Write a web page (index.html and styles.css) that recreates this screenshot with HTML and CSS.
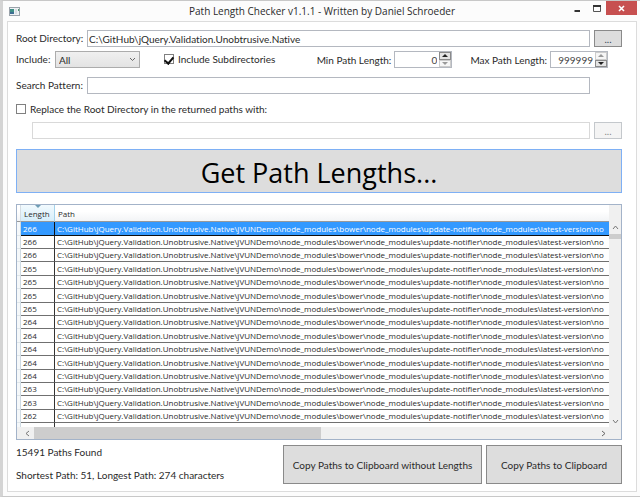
FILE: index.html
```html
<!DOCTYPE html>
<html lang="en">
<head>
<meta charset="utf-8">
<title>Path Length Checker v1.1.1 - Written by Daniel Schroeder</title>
<link rel="stylesheet" href="styles.css">
</head>
<body>
<div class="window">
  <header class="titlebar">
    <svg class="app-icon" width="11" height="9" viewBox="0 0 11 9" aria-hidden="true">
      <rect x=".5" y=".5" width="10" height="8" fill="#eef1f4" stroke="#9aa2aa"/>
      <rect x="1" y="2" width="4" height="5" fill="#3f8f86"/>
      <rect x="1" y="5" width="4" height="2" fill="#3d6d92"/>
      <rect x="6" y="2" width="2" height="5" fill="#d9dee3"/>
      <rect x="9" y="2" width="1" height="2" fill="#4a9a70"/>
    </svg>
    <h1 class="title">Path Length Checker v1.1.1 - Written by Daniel Schroeder</h1>
    <div class="window-buttons">
      <button class="win-btn" aria-label="Minimize"><svg width="7" height="9" viewBox="0 0 7 9"><path d="M.5 7H6" stroke="#333" stroke-width="2"/></svg></button>
      <button class="win-btn win-max" aria-label="Maximize"><svg width="8" height="7" viewBox="0 0 8 7"><path d="M.5 1v5.500h7V1" fill="none" stroke="#555"/><path d="M0 1h8" stroke="#333" stroke-width="2"/></svg></button>
      <button class="win-btn win-close" aria-label="Close"><svg width="7" height="7" viewBox="0 0 7 7"><path d="M1 1l5 5M6 1L1 6" stroke="#fff" stroke-width="1.600"/></svg></button>
    </div>
  </header>

  <main class="client">
    <div class="field-row">
      <label class="field-label" for="root">Root Directory:</label>
      <input class="text-box" id="root" type="text" value="C:\GitHub\jQuery.Validation.Unobtrusive.Native">
      <button class="browse" aria-label="Browse for root directory">...</button>
    </div>

    <div class="options">
      <label class="include-label" for="include">Include:</label>
      <span class="select-wrap">
        <select class="select" id="include"><option>All</option><option>Files</option><option>Directories</option></select>
        <svg class="chevron" width="7" height="5" viewBox="0 0 7 5"><path d="M1 1l2.500 2.500L6 1" fill="none" stroke="#666"/></svg>
      </span>
      <label class="check sub-check"><input type="checkbox" checked>Include Subdirectories</label>
      <div class="number">
        <label for="min">Min Path Length:</label>
        <span class="spinner">
          <input id="min" type="text" value="0">
          <span class="steps">
            <button class="step" aria-label="Increase minimum"><svg width="6" height="3" viewBox="0 0 6 3"><path d="M0 3l3-3 3 3z"/></svg></button>
            <button class="step" aria-label="Decrease minimum" disabled><svg width="6" height="3" viewBox="0 0 6 3"><path d="M0 0l3 3 3-3z"/></svg></button>
          </span>
        </span>
      </div>
      <div class="number">
        <label for="max">Max Path Length:</label>
        <span class="spinner">
          <input id="max" type="text" value="999999">
          <span class="steps">
            <button class="step" aria-label="Increase maximum" disabled><svg width="6" height="3" viewBox="0 0 6 3"><path d="M0 3l3-3 3 3z"/></svg></button>
            <button class="step" aria-label="Decrease maximum"><svg width="6" height="3" viewBox="0 0 6 3"><path d="M0 0l3 3 3-3z"/></svg></button>
          </span>
        </span>
      </div>
    </div>

    <div class="field-row search-row">
      <label class="field-label" for="pattern">Search Pattern:</label>
      <input class="text-box" id="pattern" type="text">
    </div>

    <label class="check replace-check"><input type="checkbox">Replace the Root Directory in the returned paths with:</label>
    <div class="field-row replace-row">
      <input class="text-box" type="text" aria-label="Replacement root directory" disabled>
      <button class="browse" aria-label="Browse for replacement directory" disabled>...</button>
    </div>

    <button class="run">Get Path Lengths...</button>

    <section class="grid">
      <div class="table-area">
        <table class="paths">
          <thead><tr><th class="rowhead"></th><th class="length sorted">Length<svg class="sort" width="6" height="3" viewBox="0 0 6 3"><path d="M0 0h6L3 3z" fill="#6f9db5"/></svg></th><th class="path">Path</th></tr></thead>
          <tbody id="rows"></tbody>
        </table>
      </div>
      <div class="vscroll">
        <svg width="7" height="5" viewBox="0 0 7 5"><path d="M1 4l2.500-3L6 4" fill="none" stroke="#777"/></svg>
        <span class="vthumb"></span>
        <svg class="down" width="7" height="5" viewBox="0 0 7 5"><path d="M1 1l2.500 3L6 1" fill="none" stroke="#777"/></svg>
      </div>
      <div class="hscroll">
        <svg width="5" height="7" viewBox="0 0 5 7"><path d="M4 1L1 3.500 4 6" fill="none" stroke="#777"/></svg>
        <span class="track"><span class="hthumb"></span></span>
        <svg width="5" height="7" viewBox="0 0 5 7"><path d="M1 1l3 2.500L1 6" fill="none" stroke="#666"/></svg>
      </div>
    </section>

    <footer class="footer">
      <div class="status">
        <p>15491 Paths Found</p>
        <p>Shortest Path: 51, Longest Path: 274 characters</p>
      </div>
      <button class="copy copy-wide">Copy Paths to Clipboard without Lengths</button>
      <button class="copy">Copy Paths to Clipboard</button>
    </footer>
  </main>
</div>
<script src="script.js"></script>
</body>
</html>
```
FILE: script.js
```js
const lengths = [266, 266, 266, 265, 265, 265, 265, 264, 264, 264, 264, 264, 263, 263, 262];
const path = "C:\\GitHub\\jQuery.Validation.Unobtrusive.Native\\jVUNDemo\\node_modules\\bower\\node_modules\\update-notifier\\node_modules\\latest-version\\no";
const body = document.getElementById("rows");

function addRow(cells, className) {
  const row = body.insertRow();
  if (className) row.className = className;
  row.insertCell().className = "rowhead";
  cells.forEach((text) => { row.insertCell().textContent = text; });
}

lengths.forEach((length, i) => addRow([length, path], i === 0 ? "selected" : ""));
addRow(["", ""], "partial");
```
FILE: styles.css
```css
* { box-sizing: border-box; }

body {
  margin: 0;
  background: #fcfcfc;
  color: #2a2a2a;
  font: 10px/14px Lato, "Open Sans", sans-serif;
  font-variant-ligatures: none;
}

button, input, select { margin: 0; font: inherit; font-variant-ligatures: none; color: inherit; border-radius: 0; }
button { display: flex; align-items: center; justify-content: center; padding: 0; }
svg { display: block; flex: none; }

.window {
  display: flex;
  flex-direction: column;
  min-height: 100vh;
  padding: 0 3px 4px 4px;
  border: solid #c8c8c8;
  border-width: 1px 0 1px 3px;
  border-left-color: #d4d4d4;
}

.titlebar { display: flex; height: 20px; padding-left: 2px; align-items: center; position: relative; }
.title { flex: 1; margin: 0; font: 400 10px/14px "Open Sans", sans-serif; text-align: center; padding-left: 56px; }
.window-buttons { display: flex; align-self: flex-start; height: 14px; }
.win-btn { width: 19px; border: 0; background: none; }
.win-close { width: 31px; background: #c75050; }

.client {
  flex: 1;
  display: flex;
  flex-direction: column;
  padding: 8px 14px 7px 8px;
  border: 1px solid #dcdcdc;
  background: #fff;
}

.field-row { display: grid; grid-template-columns: 67px 1fr 28px; gap: 4px; align-items: center; }
.field-label { white-space: nowrap; padding-bottom: 2px; }
.text-box { width: 100%; height: 17px; padding: 0 1px; border: 1px solid #b4b8c0; background: #fff; }
.text-box:disabled { border-color: #d9d9d9; }
.browse { height: 17px; border: 1px solid #8a8a8a; background: #ddd; color: #345; }
.browse:disabled { border-color: #c4c8cc; background: #f4f4f4; color: #888; }

.options { display: flex; align-items: center; height: 17px; margin-top: 4px; }
.include-label { width: 39px; padding-bottom: 2px; }
.select-wrap { position: relative; display: flex; }
.select {
  appearance: none;
  width: 85px;
  height: 17px;
  padding: 0 3px;
  border: 1px solid #acacac;
  background: linear-gradient(#f0f0f0, #e3e3e3);
}
.chevron { position: absolute; right: 4px; top: 6px; pointer-events: none; }

.check { display: flex; align-items: center; gap: 4px; }
.check input {
  appearance: none;
  display: grid;
  justify-content: center;
  width: 10px;
  height: 10px;
  border: 1px solid #808080;
  background: #fff;
}
.check input:checked::before {
  content: "";
  width: 4px;
  height: 7px;
  border: solid #111;
  border-width: 0 2px 2px 0;
  rotate: 40deg;
}
.sub-check { margin: 0 auto 0 24px; padding-bottom: 2px; }

.number { display: flex; align-items: center; gap: 3px; margin-right: 14px; }
.number + .number { margin-left: 4px; }
.spinner { display: flex; width: 58px; height: 17px; border: 1px solid #b4b8c0; }
.spinner input { flex: 1; width: 0; min-width: 0; padding: 0 2px; border: 0; background: none; color: #444; text-align: right; }
.steps { display: flex; flex-direction: column; width: 12px; }
.step { flex: 1; border: 1px solid #8a8a8a; background: #e4e4e4; fill: #222; }
.step:disabled { border-color: #ccc; background: #f6f6f6; fill: #999; }

.search-row { margin-top: 9px; }
.replace-check { margin-top: 8px; }
.replace-row { grid-template-columns: 1fr 28px; margin: 6px 0 0 16px; }

.run {
  height: 44px;
  margin-top: 10px;
  padding-top: 4px;
  border: 1px solid #7eb0f5;
  background: #ddd;
  color: #000;
  font: 27px/32px "Open Sans", sans-serif;
}

.grid {
  flex: 1;
  display: grid;
  grid-template: 1fr 12px / 1fr 12px;
  min-height: 235px;
  margin-top: 11px;
  border: 1px solid #a3b3c9;
}
.table-area { overflow: hidden; min-width: 0; }
.paths {
  width: 100%;
  table-layout: fixed;
  border-collapse: separate;
  border-spacing: 0;
  font: 8px/12px "Open Sans", sans-serif;
}
.paths th {
  position: relative;
  height: 17px;
  padding: 1px 3px 0;
  border-right: 1px solid #d5dde3;
  border-bottom: 1px solid #999;
  background: linear-gradient(#fff 40%, #f2f4f6);
  font-weight: 400;
  text-align: left;
}
.paths th.path { border-right: 0; }
.paths th.sorted { background: linear-gradient(#f2fafe, #d6eefa); border-right-color: #a5d3ea; }
.paths th.rowhead { width: 4px; padding: 0; }
.paths th.length { width: 34px; }
.sort { position: absolute; left: 14px; top: 0; }
.paths td {
  height: 13px;
  padding: 0 2px;
  border-right: 1px solid #333;
  border-bottom: 1px solid #707070;
  overflow: hidden;
  white-space: nowrap;
}
.paths tr:nth-child(5n+1) td, .paths tr:nth-child(5n+4) td { height: 14px; }
.paths td:last-child { padding-right: 0; border-right: 0; }
.paths td.rowhead { padding: 0; border-right: 1px solid #cfdbe3; border-bottom-color: #dfe6ea; background: #f5f8fa; }
.paths .selected td:not(.rowhead) { background: #3399ff; border-color: #111; color: #fff; }
.paths tbody tr.partial td { height: 4px; border-bottom: 0; line-height: 3px; }

.vscroll { display: flex; flex-direction: column; align-items: center; padding: 20px 0 3px; background: #f0f0f0; }
.vthumb { width: 100%; height: 5px; margin-top: 4px; background: #cdcdcd; }
.down { margin-top: auto; }
.hscroll { grid-column: 1 / -1; display: flex; align-items: center; gap: 4px; padding: 0 15px 0 8px; background: #f0f0f0; }
.track { flex: 1; align-self: stretch; }
.hthumb { display: block; width: 51%; height: 100%; background: #cdcdcd; }

.footer { display: flex; gap: 4px; margin-top: 5px; }
.status { flex: 1; display: flex; flex-direction: column; gap: 9px; }
.status p { margin: 0; }
.copy { width: 136px; height: 39px; border: 1px solid #8a8a8a; background: #ddd; }
.copy-wide { width: 199px; }
```
